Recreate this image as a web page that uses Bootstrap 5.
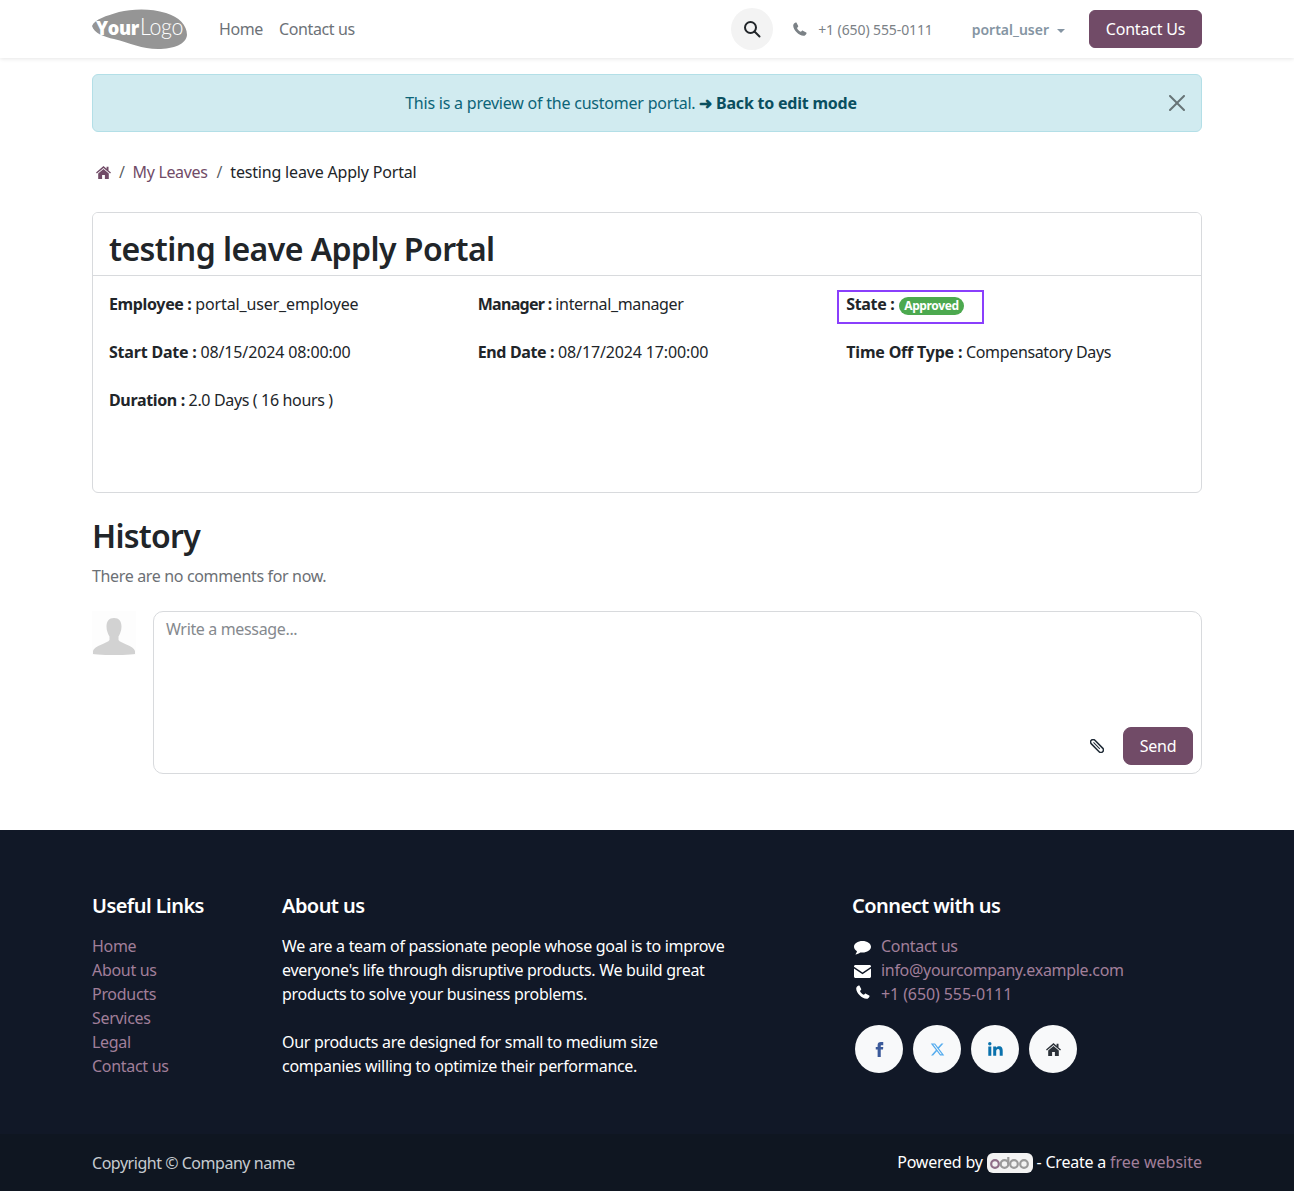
<!DOCTYPE html>
<html lang="en">
<head>
  <meta charset="UTF-8">
  <meta name="viewport" content="width=device-width, initial-scale=1.0">
  <title>testing leave Apply Portal</title>
  <link href="https://cdn.jsdelivr.net/npm/bootstrap@5.3.0/dist/css/bootstrap.min.css" rel="stylesheet">
  <style>
    body {
      font-family: "Noto Sans", sans-serif;
      font-size: 16px;
      letter-spacing: -0.35px;
      color: #212529;
      background: #fff;
    }
    a { text-decoration: none; }
    .page-wrap { max-width: 1140px; --bs-gutter-x: 30px; }
    .wide-row { --bs-gutter-x: 30px; }
    .top-bar { height: 58px; padding: 0; box-shadow: 0 1px 4px rgba(0,0,0,.1); background: #fff; }
    .top-bar .nav-link { color: #6d7278; padding: 8px; letter-spacing: -0.38px; }
    .logo-box { display: block; width: 95px; height: 40px; margin-right: 24px; }
    .logo-box svg { display: block; }
    .search-btn { width: 42px; height: 42px; border-radius: 50%; background: #f3f3f3; }
    .top-phone { flex: none; font-size: 14px; letter-spacing: -0.1px; color: #7b8186; margin-left: 20px; width: 166px; }
    .top-user { font-size: 14px; font-weight: 600; letter-spacing: 0; color: #8595a3; margin-left: 13px; margin-right: 24px; }
    .top-user::after { margin-left: 8px; vertical-align: 2px; }
    .btn-plum { background: #714b67; border-color: #714b67; color: #fff; }
    .btn-plum:hover { background: #5f3f57; color: #fff; }
    .top-btn { width: 113px; height: 38px; padding: 6px 0; letter-spacing: -0.2px; }
    .preview-alert { margin: 16px 0 0; background: #d1ebf0; border-color: #b3dfe7; color: #0c6478; letter-spacing: -0.22px; }
    .preview-alert a { color: #0a4f5f; font-weight: 700; }
    .crumbs { margin: 28px 0 28px; padding-left: 4px; }
    .crumbs a { color: #714b67; }
    .crumbs svg { vertical-align: -1px; }
    .crumbs .breadcrumb-item { color: #212529; }
    .crumbs .breadcrumb-item + .breadcrumb-item { padding-left: 8px; }
    .crumbs .breadcrumb-item + .breadcrumb-item::before { padding-right: 8px; }
    .crumbs .active { padding-left: 9px !important; letter-spacing: -0.18px; }
    .leave-card { border-color: #d8dadd; border-radius: 6px; }
    .leave-head { background: #fff; padding: 16px 16px 7px; border-color: #d8dadd; }
    .leave-title { font-size: 32px; line-height: 39px; font-weight: 600; letter-spacing: -0.55px; margin: 0; }
    .leave-body { padding: 16px; min-height: 216px; }
    .field-item { margin-bottom: 24px; }
    .field-wide { letter-spacing: -0.14px; }
    .label-tight { letter-spacing: -0.7px; }
    .label-loose { letter-spacing: -0.2px; }
    .state-box { display: block; width: 147px; height: 34px; margin: -2px 0 -8px -9px; padding: 0 0 0 7px; border: 2px solid #8a3ffc; }
    .state-pill { display: inline-block; background: #4ca94f; color: #fff; font-size: 12px; font-weight: 700; line-height: 18px; margin-left: 1px; padding: 0 5px; border-radius: 9px; }
    .history-title { font-size: 32px; line-height: 39px; font-weight: 600; letter-spacing: -0.75px; margin: 23px 0 0; }
    .muted-line { color: #6c7075; margin: 9px 0 23px; }
    .avatar-box { width: 44px; height: 44px; margin-right: 17px; flex: none; }
    .message-box { height: 163px; border: 1px solid #d8dadd; border-radius: 10px; padding: 5px 8px 8px 12px; }
    .message-hint { color: #85898e; }
    .clip-ico { margin-right: 19px; }
    .send-btn { width: 70px; height: 38px; padding: 6px 0; border-radius: 8px; letter-spacing: -0.2px; }
    .foot { margin-top: 56px; margin-bottom: 2px; background: #111827; color: #fff; letter-spacing: -0.3px; }
    .foot-top { padding-top: 63px; height: 304px; }
    .foot-title { font-size: 20px; line-height: 26px; font-weight: 600; letter-spacing: -0.55px; margin: 0 0 15px; }
    .foot a { color: #a17f9a; }
    .foot-list { list-style: none; padding: 0; margin: 0; }
    .contact-ico { display: inline-block; width: 17px; margin: 0 10px 0 2px; text-align: center; }
    .ico-up { vertical-align: 1px; }
    .num-wide { letter-spacing: -0.1px; }
    .social-row { margin: 19px 0 0 3px; }
    .social-dot { width: 48px; height: 48px; border-radius: 50%; background: #f8f9fa; margin-right: 10px; }
    .foot-end { height: 57px; background: #0f1621; color: #c6cbd0; letter-spacing: -0.47px; }
    .copy-text { padding-top: 1px; }
    .odoo-tag { display: inline-block; width: 46px; height: 20px; background: #f3f3f3; border-radius: 6px; vertical-align: -5px; }
    .odoo-tag svg { display: block; }
    .foot-end .powered { color: #fff; letter-spacing: -0.22px; padding-bottom: 2px; }
    .foot-end .powered a { letter-spacing: 0; }
  </style>
</head>
<body>

<nav class="navbar top-bar">
  <div class="container page-wrap d-flex align-items-center flex-nowrap">
    <a class="logo-box" href="#">
      <svg width="95" height="40" viewBox="0 0 95 40">
        <path d="M0 17C3 10 14 7 27 3C40 0 58-1 74 4C87 8 95 16 95 26C94 35 82 40 66 40C50 40 38 34 22 30C12 28 2 24 0 17Z" fill="#959595"/>
        <text x="4" y="26" font-family="Open Sans, sans-serif" font-size="20" font-weight="800" fill="#fff" textLength="43" lengthAdjust="spacingAndGlyphs">Your</text>
        <text x="48" y="26" font-family="Lato, sans-serif" font-size="23" font-weight="300" fill="#fff" textLength="43" lengthAdjust="spacingAndGlyphs">Logo</text>
      </svg>
    </a>
    <ul class="navbar-nav flex-row">
      <li class="nav-item"><a class="nav-link" href="#">Home</a></li>
      <li class="nav-item"><a class="nav-link" href="#">Contact us</a></li>
    </ul>
    <div class="d-flex align-items-center ms-auto">
      <a class="search-btn d-flex align-items-center justify-content-center" href="#">
        <svg width="18" height="18" viewBox="0 0 18 18" fill="none" stroke="#212529" stroke-width="2"><circle cx="7.5" cy="7.500" r="5.500"/><path d="M11.500 11.500l5 5" stroke-linecap="round"/></svg>
      </a>
      <div class="top-phone d-flex align-items-center">
        <svg class="me-2" width="14" height="14" viewBox="0 0 14 14"><path d="M3.400.6 5.200 3.900c.2.400 0 .8-.3 1.100L4 5.900c.6 1.500 2.200 3.100 3.900 3.900l.9-.9c.3-.3.8-.4 1.100-.2l3.300 1.900c.3.200.4.500.3.800-.3 1-1.500 2.400-3 2.400C6 13.800.2 8 .2 3.600.2 2.100 1.600.8 2.600.5c.3-.1.600 0 .8.100z" fill="#7b8186"/></svg>
        <span>&nbsp;+1 (650) 555-0111</span>
      </div>
      <div class="dropdown">
        <a class="top-user dropdown-toggle d-block" href="#" data-bs-toggle="dropdown">portal_user</a>
        <ul class="dropdown-menu"><li><a class="dropdown-item" href="#">My Account</a></li></ul>
      </div>
      <a class="btn btn-plum top-btn" href="#">Contact Us</a>
    </div>
  </div>
</nav>

<div class="container page-wrap">
  <div class="alert alert-dismissible preview-alert text-center" role="alert">
    This is a preview of the customer portal. <a href="#">➜ Back to edit mode</a>
    <button type="button" class="btn-close" data-bs-dismiss="alert" aria-label="Close"></button>
  </div>

  <ol class="breadcrumb crumbs">
    <li class="breadcrumb-item"><a href="#">
      <svg width="15" height="13" viewBox="0 0 15 13" fill="#714b67"><path d="M7.500 0 0 6.600l.9 1 6.600-5.700 6.600 5.700.9-1-2.500-2.200V.8H10.600v1.900z"/><path d="M7.500 3 2.200 7.600V13h3.900V9h2.800v4h3.900V7.600z"/></svg>
    </a></li>
    <li class="breadcrumb-item"><a href="#">My Leaves</a></li>
    <li class="breadcrumb-item active text-reset">testing leave Apply Portal</li>
  </ol>

  <div class="card leave-card">
    <div class="card-header leave-head">
      <h2 class="leave-title">testing leave Apply Portal</h2>
    </div>
    <div class="card-body leave-body">
      <div class="row wide-row">
        <div class="col-4 field-item"><strong>Employee :</strong> <span class="field-wide">portal_user_employee</span></div>
        <div class="col-4 field-item"><strong class="label-tight">Manager :</strong> internal_manager</div>
        <div class="col-4 field-item">
          <div class="state-box"><strong>State :</strong> <span class="state-pill">Approved</span></div>
        </div>
        <div class="col-4 field-item"><strong class="label-loose">Start Date :</strong> <span class="field-wide">08/15/2024 08:00:00</span></div>
        <div class="col-4 field-item"><strong>End Date :</strong> <span class="field-wide">08/17/2024 17:00:00</span></div>
        <div class="col-4 field-item"><strong class="label-loose">Time Off Type :</strong> Compensatory Days</div>
        <div class="col-4 field-item"><strong>Duration :</strong> 2.0 Days ( 16 hours )</div>
      </div>
    </div>
  </div>

  <h3 class="history-title">History</h3>
  <p class="muted-line">There are no comments for now.</p>

  <div class="d-flex">
    <div class="avatar-box">
      <svg width="44" height="44" viewBox="0 0 44 44"><rect width="44" height="44" fill="#fdfdfd"/><path d="M22 7c-5 0-7.500 3.300-7.500 8.500 0 4 1.500 7.500 3 10v3.500C16 32 2 35 1 40v3c7 1.500 35 1.500 42 0v-3c-1-5-15-8-16.500-11v-3.500c1.500-2.500 3-6 3-10C29.500 10.300 27 7 22 7z" fill="#d2d2d2"/></svg>
    </div>
    <div class="message-box flex-grow-1 d-flex flex-column">
      <div class="message-hint flex-grow-1">Write a message...</div>
      <div class="d-flex align-items-center justify-content-end">
        <svg class="clip-ico" width="14" height="14" viewBox="0 0 14 14" fill="none" stroke="#1f2a36" stroke-width="1.500"><g transform="rotate(45 7 7)"><rect x="-1" y="4.500" width="16" height="5" rx="2.500"/><path d="M2 7h9" stroke-width="1"/></g></svg>
        <a class="btn btn-plum send-btn" href="#">Send</a>
      </div>
    </div>
  </div>
</div>

<footer class="foot">
  <div class="container page-wrap foot-top">
    <div class="row wide-row">
      <div class="col-2">
        <h5 class="foot-title">Useful Links</h5>
        <ul class="foot-list">
          <li><a href="#">Home</a></li>
          <li><a href="#">About us</a></li>
          <li><a href="#">Products</a></li>
          <li><a href="#">Services</a></li>
          <li><a href="#">Legal</a></li>
          <li><a href="#">Contact us</a></li>
        </ul>
      </div>
      <div class="col-5">
        <h5 class="foot-title">About us</h5>
        <p class="mb-4">We are a team of passionate people whose goal is to improve everyone's life through disruptive products. We build great products to solve your business problems.</p>
        <p class="mb-0">Our products are designed for small to medium size companies willing to optimize their performance.</p>
      </div>
      <div class="col-4 offset-1">
        <h5 class="foot-title">Connect with us</h5>
        <ul class="foot-list">
          <li><span class="contact-ico"><svg width="17" height="14" viewBox="0 0 17 14" fill="#fff"><path d="M8.500 0C3.800 0 0 2.500 0 5.800c0 1.800 1.200 3.400 3 4.500-.2 1-.8 2.200-1.600 3.200 1.800-.3 3.500-1.100 4.900-2.100.7.100 1.400.2 2.200.2 4.700 0 8.500-2.600 8.500-5.800S13.200 0 8.500 0z"/></svg></span><a href="#">Contact us</a></li>
          <li><span class="contact-ico"><svg width="17" height="13" viewBox="0 0 17 13" fill="#fff"><path d="M1.500 0h14c.8 0 1.500.6 1.500 1.400v.3L8.500 7.500 0 1.700v-.3C0 .6.700 0 1.500 0z"/><path d="M0 3.500l8.500 5.800L17 3.500v8c0 .8-.7 1.500-1.500 1.500h-14C.7 13 0 12.300 0 11.500z"/></svg></span><a href="#">info@yourcompany.example.com</a></li>
          <li><span class="contact-ico"><svg class="ico-up" width="14" height="14" viewBox="0 0 14 14"><path d="M3.400.6 5.200 3.900c.2.400 0 .8-.3 1.100L4 5.900c.6 1.500 2.200 3.100 3.900 3.900l.9-.9c.3-.3.8-.4 1.100-.2l3.300 1.900c.3.200.4.500.3.800-.3 1-1.500 2.400-3 2.400C6 13.800.2 8 .2 3.600.2 2.100 1.600.8 2.600.5c.3-.1.600 0 .8.100z" fill="#fff"/></svg></span><a class="num-wide" href="#">+1 (650) 555-0111</a></li>
        </ul>
        <div class="social-row d-flex">
          <a class="social-dot d-flex align-items-center justify-content-center" href="#">
            <svg width="15" height="15" viewBox="0 0 24 24" fill="#3b5a9a"><path d="M9 8H6v4h3v12h5V12h3.600l.4-4h-4V6.300c0-1 .2-1.300 1.100-1.300H18V0h-3.800C10.600 0 9 1.600 9 4.600z"/></svg>
          </a>
          <a class="social-dot d-flex align-items-center justify-content-center" href="#">
            <svg width="15" height="15" viewBox="0 0 24 24" fill="#55acee"><path d="M18.244 2.250h3.308l-7.227 8.260 8.502 11.240H16.170l-5.214-6.817L4.990 21.750H1.680l7.730-8.835L1.254 2.250H8.080l4.713 6.231zm-1.161 17.520h1.833L7.084 4.126H5.117z"/></svg>
          </a>
          <a class="social-dot d-flex align-items-center justify-content-center" href="#">
            <svg width="15" height="14" viewBox="0 0 15 14" fill="#0a72ad"><circle cx="1.800" cy="1.800" r="1.700"/><rect x=".3" y="4.500" width="3" height="9.300"/><path d="M5.200 4.500h2.900v1.300c.5-.9 1.500-1.500 2.900-1.500 2.900 0 3.700 1.800 3.700 4.500v5h-3V9.300c0-1.200-.2-2.400-1.600-2.400s-1.900 1.100-1.900 2.400v4.500h-3z"/></svg>
          </a>
          <a class="social-dot d-flex align-items-center justify-content-center" href="#">
            <svg width="15" height="13" viewBox="0 0 15 13" fill="#2b3138"><path d="M7.500 0 0 6.600l.9 1 6.600-5.700 6.600 5.700.9-1-2.500-2.200V.8H10.600v1.900z"/><path d="M7.500 3 2.200 7.600V13h3.900V9h2.800v4h3.900V7.600z"/></svg>
          </a>
        </div>
      </div>
    </div>
  </div>
  <div class="foot-end">
    <div class="container page-wrap d-flex justify-content-between align-items-center h-100">
      <span class="copy-text">Copyright © Company name</span>
      <span class="powered">Powered by
        <span class="odoo-tag">
          <svg width="46" height="20" viewBox="0 0 46 20" fill="none" stroke-width="2.200">
            <circle cx="8" cy="11" r="3.800" stroke="#8f6f88"/>
            <circle cx="17.500" cy="11" r="3.800" stroke="#9a9a9a"/>
            <path d="M21.300 4v7" stroke="#9a9a9a"/>
            <circle cx="27" cy="11" r="3.800" stroke="#9a9a9a"/>
            <circle cx="37" cy="11" r="3.800" stroke="#9a9a9a"/>
          </svg>
        </span>
        - Create a <a href="#">free website</a></span>
    </div>
  </div>
</footer>

<script src="https://cdn.jsdelivr.net/npm/bootstrap@5.3.0/dist/js/bootstrap.bundle.min.js"></script>
</body>
</html>
